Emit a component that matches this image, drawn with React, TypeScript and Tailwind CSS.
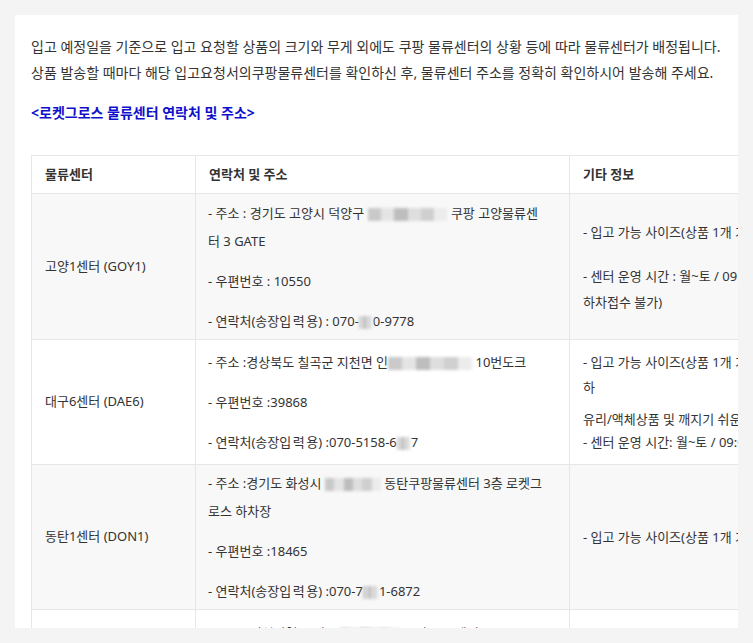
import React from "react";

const Blur = ({ w }: { w: number }) => (
  <span
    className="inline-block align-middle h-[13px] blur-[1.5px] overflow-hidden"
    style={{ width: w }}
  >
    <span className="flex h-full w-full">
      <span className="flex-1 bg-[#c9c9c9]" />
      <span className="flex-1 bg-[#e4e4e4]" />
      <span className="flex-1 bg-[#bdbdbd]" />
      <span className="flex-1 bg-[#dedede]" />
      <span className="flex-1 bg-[#cfcfcf]" />
      <span className="flex-1 bg-[#ececec]" />
    </span>
  </span>
);

const L = ({ children, className = "" }: { children: React.ReactNode; className?: string }) => (
  <div className={"whitespace-nowrap " + className}>{children}</div>
);

const Rec = () => (
  <>
    연락처(송장<span className="tracking-[1.5px]">입력</span>용)
  </>
);

export default function App() {
  return (
    <div
      className="min-h-[643px] bg-[#f4f4f4] pt-[15px] pl-[15px]"
      style={{ fontFamily: "'Noto Sans', 'Noto Sans CJK KR', sans-serif" }}
    >
      <div className="w-[723px] h-[613px] bg-white overflow-hidden pl-4 pt-[19px] text-[#333] text-[13px]">
        <div className="leading-[26px] whitespace-nowrap text-[14px]">
          <div>입고 예정일을 기준으로 입고 요청할 상품의 크기와 무게 외에도 쿠팡 물류센터의 상황 등에 따라 물류센터가 배정됩니다.</div>
          <div>상품 발송할 때마다 해당 입고요청서의쿠팡물류센터를 확인하신 후, 물류센터 주소를 정확히 확인하시어 발송해 주세요.</div>
        </div>
        <div className="mt-[14px] leading-[26px] text-[14px] font-bold text-[#1010cc]">
          &lt;로켓그로스 물류센터 연락처 및 주소&gt;
        </div>
        <table className="mt-[29px] border-collapse table-fixed w-[880px] text-[13px] text-[#333]">
          <colgroup>
            <col className="w-[164px]" />
            <col className="w-[374px]" />
            <col className="w-[342px]" />
          </colgroup>
          <thead>
            <tr className="h-[38px] bg-white">
              <th className="border border-[#e6e6e6] text-left font-semibold px-[13px]">물류센터</th>
              <th className="border border-[#e6e6e6] text-left font-semibold px-[13px]">연락처 및 주소</th>
              <th className="border border-[#e6e6e6] text-left font-semibold px-[13px]">기타 정보</th>
            </tr>
          </thead>
          <tbody>
            <tr className="h-[146px] bg-[#f8f8f8]">
              <td className="border border-[#e6e6e6] px-[13px] align-middle">고양1센터 (GOY1)</td>
              <td className="border border-[#e6e6e6] px-[12px] align-middle">
                <div className="flex flex-col gap-[12px] leading-[28px]">
                  <div>
                    <L>- 주소 : 경기도 고양시 덕양구 <Blur w={80} /> 쿠팡 고양물류센</L>
                    <L>터 3 GATE</L>
                  </div>
                  <L>- 우편번호 : 10550</L>
                  <L>- <Rec /> : 070-<Blur w={14} />0-9778</L>
                </div>
              </td>
              <td className="border border-[#e6e6e6] px-[13px] align-middle">
                <div className="flex flex-col gap-[18px] leading-[26px]">
                  <L>- 입고 가능 사이즈(상품 1개 기준) : 가로+세로+높이 합 250cm 이하</L>
                  <div>
                    <L>- 센터 운영 시간 : 월~토 / 09:00 ~ 17:00 (일요일, 공휴일</L>
                    <L>하차접수 불가)</L>
                  </div>
                </div>
              </td>
            </tr>
            <tr className="h-[125px] bg-white">
              <td className="border border-[#e6e6e6] px-[13px] align-middle">대구6센터 (DAE6)</td>
              <td className="border border-[#e6e6e6] px-[12px] align-middle">
                <div className="flex flex-col gap-[12px] leading-[28px]">
                  <L>- 주소 :경상북도 칠곡군 지천면 인<Blur w={84} /> 10번도크</L>
                  <L>- 우편번호 :39868</L>
                  <L>- <Rec /> :070-5158-6<Blur w={14} />7</L>
                </div>
              </td>
              <td className="border border-[#e6e6e6] px-[13px] align-middle">
                <div className="leading-[25px]">
                  <L>- 입고 가능 사이즈(상품 1개 기준) : 가로+세로+높이 합 250cm 이</L>
                  <L>하</L>
                  <L className="mt-[7px]">유리/액체상품 및 깨지기 쉬운 상품 입고 불가</L>
                  <L className="-mt-[2px]">- 센터 운영 시간: 월~토 / 09:00 ~ 17:00</L>
                </div>
              </td>
            </tr>
            <tr className="h-[145px] bg-[#f8f8f8]">
              <td className="border border-[#e6e6e6] px-[13px] align-middle">동탄1센터 (DON1)</td>
              <td className="border border-[#e6e6e6] px-[12px] align-middle">
                <div className="flex flex-col gap-[12px] leading-[28px]">
                  <div>
                    <L>- 주소 :경기도 화성시 <Blur w={56} /> 동탄쿠팡물류센터 3층 로켓그</L>
                    <L>로스 하차장</L>
                  </div>
                  <L>- 우편번호 :18465</L>
                  <L>- <Rec /> :070-7<Blur w={16} />1-6872</L>
                </div>
              </td>
              <td className="border border-[#e6e6e6] px-[13px] align-middle">
                <L className="leading-[26px]">- 입고 가능 사이즈(상품 1개 기준) : 가로+세로+높이 합 250cm 이하</L>
              </td>
            </tr>
            <tr className="h-[125px] bg-white">
              <td className="border border-[#e6e6e6] px-[13px] align-middle">인천32센터 (ICN32)</td>
              <td className="border border-[#e6e6e6] px-[12px] align-top pt-[9px]">
                <div className="flex flex-col gap-[12px] leading-[28px]">
                  <L>- 주소 : 인천광역시 서구 <Blur w={60} /> 쿠팡 물류센터</L>
                  <L>- 우편번호 : 22850</L>
                </div>
              </td>
              <td className="border border-[#e6e6e6] px-[13px] align-middle">
                <L>- 입고 가능 사이즈(상품 1개 기준)</L>
              </td>
            </tr>
          </tbody>
        </table>
      </div>
    </div>
  );
}
